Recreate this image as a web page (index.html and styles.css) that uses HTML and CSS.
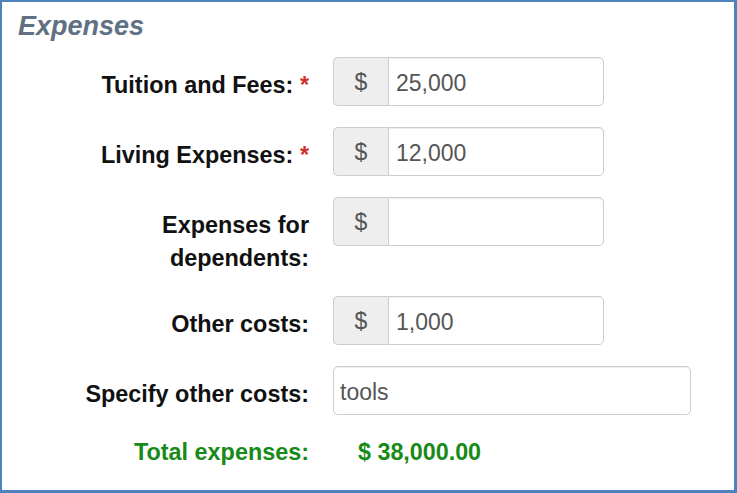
FILE: index.html
```html
<!DOCTYPE html>
<html lang="en">
<head>
<meta charset="utf-8">
<title>Expenses</title>
<link rel="stylesheet" href="styles.css">
</head>
<body>
<div class="frame">
  <h2 class="title">Expenses</h2>
  <form class="form">
    <div class="row">
      <label class="lbl">Tuition and Fees: <span class="req">*</span></label>
      <div class="group">
        <span class="addon">$</span>
        <input class="ctl" type="text" value="25,000">
      </div>
    </div>
    <div class="row">
      <label class="lbl">Living Expenses: <span class="req">*</span></label>
      <div class="group">
        <span class="addon">$</span>
        <input class="ctl" type="text" value="12,000">
      </div>
    </div>
    <div class="row">
      <label class="lbl">Expenses for dependents:</label>
      <div class="group">
        <span class="addon">$</span>
        <input class="ctl" type="text" value="">
      </div>
    </div>
    <div class="row">
      <label class="lbl">Other costs:</label>
      <div class="group">
        <span class="addon">$</span>
        <input class="ctl" type="text" value="1,000">
      </div>
    </div>
    <div class="row">
      <label class="lbl">Specify other costs:</label>
      <input class="ctl ctl-wide" type="text" value="tools">
    </div>
    <div class="row total">
      <span class="lbl total-lbl">Total expenses:</span>
      <span class="total-val">$ 38,000.00</span>
    </div>
  </form>
</div>
</body>
</html>
```

FILE: styles.css
```css
html, body {
  margin: 0;
  padding: 0;
  background: #fff;
}

.frame {
  box-sizing: border-box;
  width: 737px;
  height: 493px;
  border-style: solid;
  border-color: #4f81bd;
  border-width: 2px 3px 3px 2px;
  padding: 9px 0 0 0;
  font-family: "Liberation Sans", Arial, sans-serif;
  font-size: 23px;
  color: #111;
}

.title {
  margin: 0 0 16px 0;
  padding-left: 16px;
  font-size: 27px;
  line-height: 30px;
  font-weight: bold;
  font-style: italic;
  color: #607183;
}

.form {
  margin: 0;
  padding-left: 72px;
}

.row {
  display: flex;
  align-items: flex-start;
  gap: 24px;
  margin-bottom: 21px;
}

.lbl {
  flex: 0 0 235px;
  box-sizing: border-box;
  text-align: right;
  font-weight: bold;
  font-size: 23.4px;
  line-height: 33px;
  padding-top: 12px;
  color: #111;
}

.req {
  color: #d0302c;
  font-weight: bold;
}

.group {
  display: flex;
  width: 271px;
  height: 49px;
}

.addon {
  box-sizing: border-box;
  flex: 0 0 55px;
  height: 49px;
  display: flex;
  align-items: center;
  justify-content: center;
  padding-top: 2px;
  background: #eeeeee;
  border: 1px solid #cccccc;
  border-right: 0;
  border-radius: 5px 0 0 5px;
  color: #555;
  font-size: 23px;
}

.ctl {
  box-sizing: border-box;
  width: 216px;
  height: 49px;
  margin: 0;
  padding: 4px 7px 0 7px;
  border: 1px solid #cccccc;
  border-radius: 0 5px 5px 0;
  background: #fff;
  box-shadow: inset 0 1px 1px rgba(0, 0, 0, 0.075);
  font-family: "Liberation Sans", Arial, sans-serif;
  font-size: 23px;
  color: #555;
  outline: none;
}

.ctl-wide {
  width: 358px;
  padding-left: 6px;
  border-radius: 5px;
}

.total .total-lbl {
  padding-top: 0;
  color: #178a17;
}

.total-val {
  padding-left: 25px;
  font-weight: bold;
  font-size: 23.3px;
  line-height: 33px;
  color: #178a17;
}
```
